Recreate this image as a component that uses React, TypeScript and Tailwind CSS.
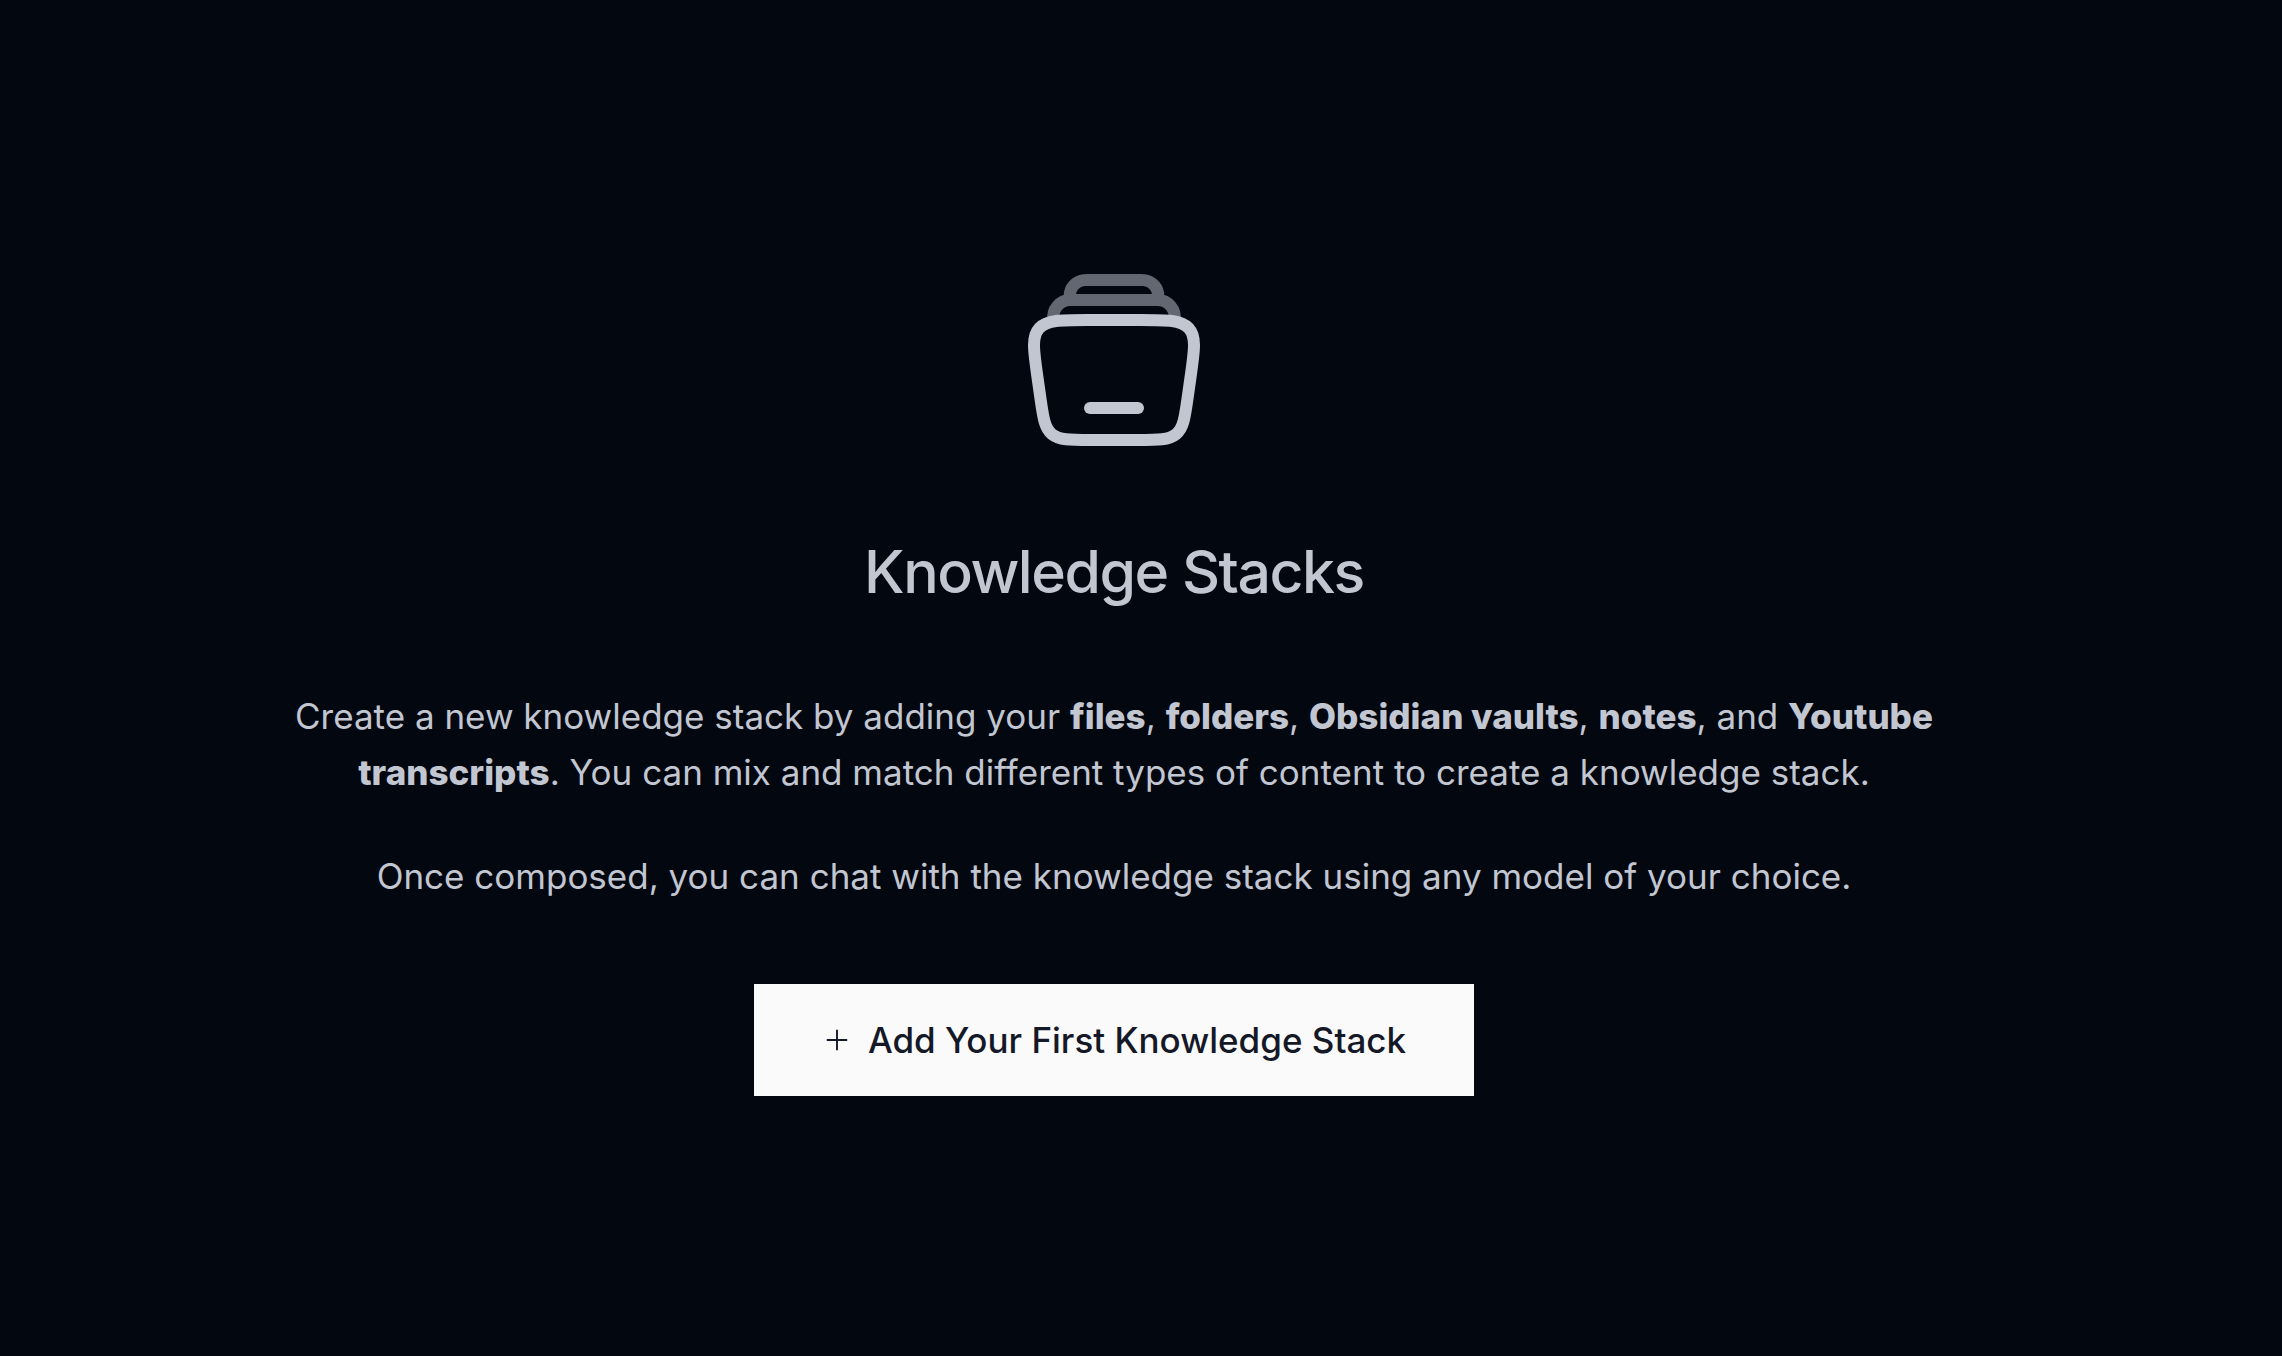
import type { ReactNode } from "react";

function StackIcon() {
  return (
    <svg
      className="size-48"
      viewBox="0 0 24 24"
      fill="none"
      stroke="currentColor"
      strokeWidth="1.5"
      aria-hidden="true"
    >
      <g opacity="0.5">
        <path d="M19.5617 7C19.7904 5.69523 18.7863 4.5 17.4617 4.5H6.53788C5.21323 4.5 4.20922 5.69523 4.43784 7" />
        <path d="M17.4999 4.5C17.5283 4.24092 17.5425 4.11135 17.5427 4.00435C17.545 2.98072 16.7739 2.12064 15.7561 2.01142C15.6497 2 15.5194 2 15.2588 2H8.74099C8.48035 2 8.35002 2 8.24362 2.01142C7.22584 2.12064 6.45481 2.98072 6.45704 4.00434C6.45727 4.11135 6.47146 4.2409 6.49983 4.5" />
      </g>
      <path d="M21.1935 16.793C20.8437 19.2739 20.6689 20.5143 19.7717 21.2572C18.8745 22 17.5512 22 14.9046 22H9.09536C6.44881 22 5.12553 22 4.22834 21.2572C3.33115 20.5143 3.15626 19.2739 2.80648 16.793L2.38351 13.793C1.93748 10.6294 1.71447 9.04765 2.66232 8.02383C3.61017 7 5.29758 7 8.67239 7H15.3276C18.7024 7 20.3898 7 21.3377 8.02383C22.2855 9.04765 22.0625 10.6294 21.6165 13.793L21.1935 16.793Z" />
      <path d="M9 18H15" strokeLinecap="round" />
    </svg>
  );
}

function PlusIcon() {
  return (
    <svg
      className="size-[30px] shrink-0"
      viewBox="0 0 15 15"
      fill="none"
      stroke="currentColor"
      strokeWidth="0.95"
      strokeLinecap="round"
      aria-hidden="true"
    >
      <path d="M7.5 2.75V12.25M2.75 7.5H12.25" />
    </svg>
  );
}

function Term({ children }: { children: ReactNode }) {
  return <strong className="font-extrabold">{children}</strong>;
}

export default function App() {
  return (
    <main className="flex min-h-screen flex-col items-center bg-[#030710] pt-[264px] pr-[54px] font-['Inter','Liberation_Sans',sans-serif] text-[#c1c6d1]">
      <StackIcon />
      <h1 className="mt-20 text-[59px] leading-[72px] font-medium tracking-tight">Knowledge Stacks</h1>
      <div className="mt-20 flex max-w-[1664px] flex-col gap-12 text-center text-[35px] leading-[56px]">
        <p>
          Create a new knowledge stack by adding your <Term>files</Term>, <Term>folders</Term>,{" "}
          <Term>Obsidian vaults</Term>, <Term>notes</Term>, and <Term>Youtube transcripts</Term>. You can mix and
          match different types of content to create a knowledge stack.
        </p>
        <p>Once composed, you can chat with the knowledge stack using any model of your choice.</p>
      </div>
      <button
        type="button"
        className="mt-20 flex h-28 items-center gap-4 bg-[#fafafa] px-[68px] text-[35px] font-medium text-[#141827]"
      >
        <PlusIcon />
        Add Your First Knowledge Stack
      </button>
    </main>
  );
}
